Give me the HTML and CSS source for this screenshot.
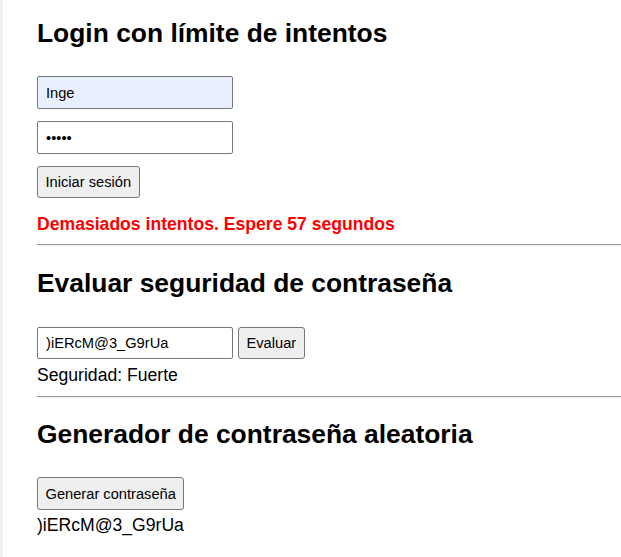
FILE: index.html
```html
<!DOCTYPE html>
<html lang="es">
<head>
<meta charset="utf-8">
<title>Seguridad</title>
<link rel="stylesheet" href="styles.css">
</head>
<body>
<div class="page">
  <section class="block first">
    <h2 class="title">Login con límite de intentos</h2>
    <div class="stack">
      <input class="field user" type="text" value="Inge">
      <input class="field" type="password" value="12345">
      <div><button class="btn">Iniciar sesión</button></div>
    </div>
    <p class="error">Demasiados intentos. Espere 57 segundos</p>
  </section>
  <hr class="rule">
  <section class="block middle">
    <h2 class="title">Evaluar seguridad de contraseña</h2>
    <div class="row">
      <input class="field" type="text" value=")iERcM@3_G9rUa">
      <button class="btn">Evaluar</button>
    </div>
    <div class="result">Seguridad: Fuerte</div>
  </section>
  <hr class="rule rule-two">
  <section class="block last">
    <h2 class="title">Generador de contraseña aleatoria</h2>
    <div><button class="btn">Generar contraseña</button></div>
    <div class="result">)iERcM@3_G9rUa</div>
  </section>
</div>
</body>
</html>
```
FILE: styles.css
```css
html, body {
  margin: 0;
  padding: 0;
  background: #fff;
}
body {
  font-family: "Liberation Sans", Arial, sans-serif;
  font-size: 17.6px;
  color: #000;
}
.page {
  border-left: 3px solid #efefef;
  padding-left: 34px;
  padding-top: 18px;
  min-height: 557px;
  box-sizing: border-box;
}
.block {
  display: flex;
  flex-direction: column;
  align-items: flex-start;
}
.title {
  font-size: 26.4px;
  font-weight: bold;
  line-height: 30px;
  margin: 0 0 28px;
}
.middle .title {
  margin-top: 22px;
  margin-bottom: 29px;
}
.stack {
  display: flex;
  flex-direction: column;
  gap: 12px;
}
.field {
  box-sizing: border-box;
  width: 196px;
  height: 33px;
  padding: 0 8px;
  font-family: "Liberation Sans", Arial, sans-serif;
  font-size: 14.67px;
  color: #000;
  border: 1px solid #767676;
  border-radius: 2px;
  background: #fff;
  margin: 0;
}
.field.user {
  background: #e8f0fe;
}
.btn {
  box-sizing: border-box;
  height: 32px;
  padding: 0 7.5px;
  font-family: "Liberation Sans", Arial, sans-serif;
  font-size: 14.67px;
  color: #000;
  background: #efefef;
  border: 1px solid #767676;
  border-radius: 3px;
  margin: 0;
}
.row .field { height: 32px; }
.last .btn { height: 33px; }
.error {
  color: #ff0000;
  font-weight: bold;
  line-height: 20px;
  margin: 16px 0 0;
}
.rule {
  width: 100%;
  box-sizing: border-box;
  margin: 10px 0 0;
  border: 0;
  border-top: 1px solid #9a9a9a;
  border-bottom: 1px solid #eeeeee;
  height: 0;
}
.rule-two {
  margin-top: 11px;
}
.row {
  display: flex;
  gap: 5px;
}
.result {
  margin-top: 5px;
  line-height: 20px;
}
.middle .result {
  margin-top: 6px;
}
.last .title {
  margin-top: 21px;
  margin-bottom: 28px;
}
```
